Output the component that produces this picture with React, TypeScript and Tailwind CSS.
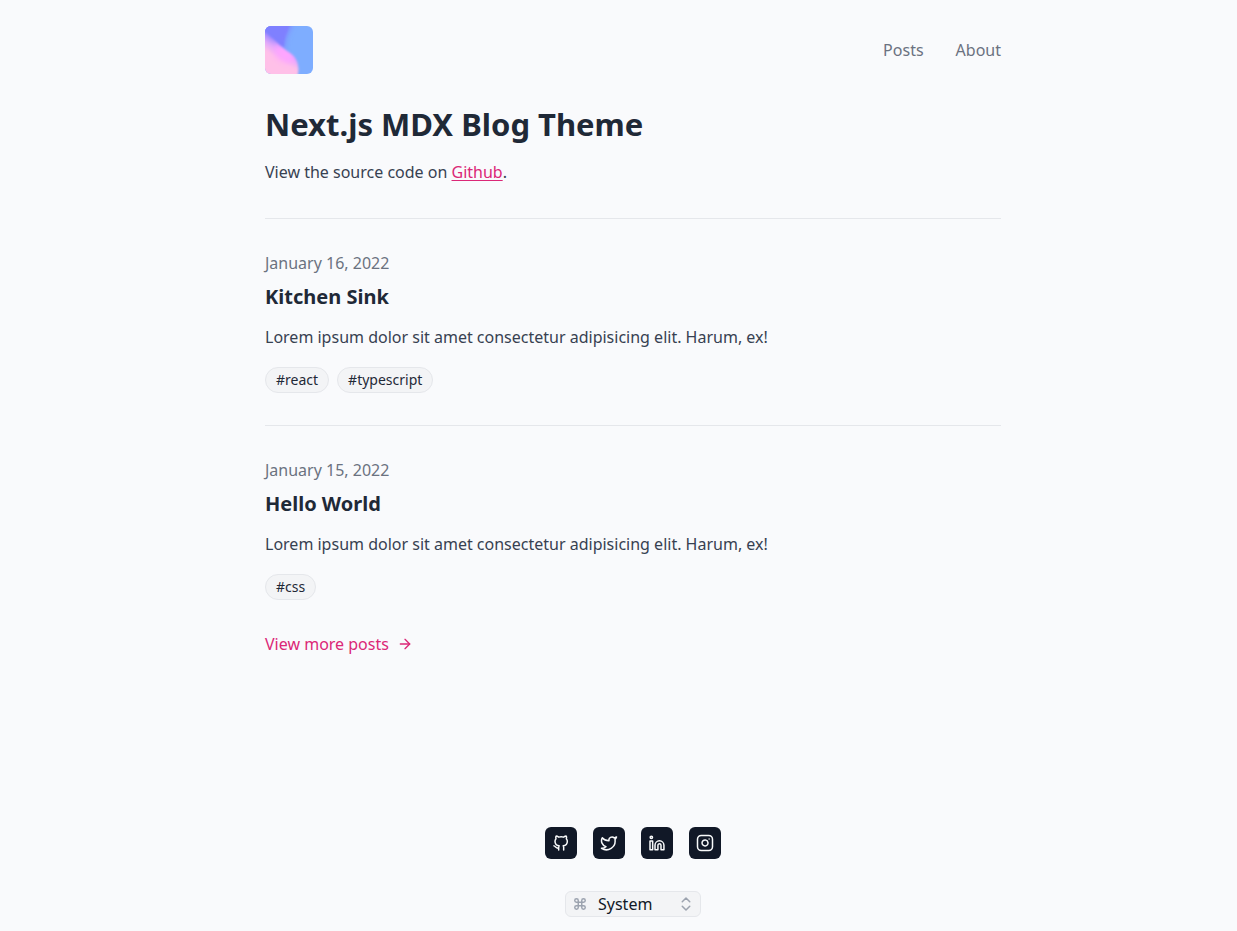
import React from "react";
import { ArrowRight, ChevronsUpDown, Command, Instagram, Twitter } from "lucide-react";

const posts = [
  { date: "January 16, 2022", title: "Kitchen Sink", tags: ["react", "typescript"] },
  { date: "January 15, 2022", title: "Hello World", tags: ["css"] },
];

function Logo() {
  return (
    <svg viewBox="0 0 48 48" className="size-12 rounded-md" aria-hidden="true">
      <defs>
        <filter id="soft" x="-30%" y="-30%" width="160%" height="160%">
          <feGaussianBlur stdDeviation="3" />
        </filter>
        <filter id="edge" x="-30%" y="-30%" width="160%" height="160%">
          <feGaussianBlur stdDeviation="1" />
        </filter>
        <linearGradient id="pink" gradientUnits="userSpaceOnUse" x1="8" y1="12" x2="0" y2="24">
          <stop offset="0" stopColor="#a08aff" />
          <stop offset="0.5" stopColor="#e0a8fa" />
          <stop offset="1" stopColor="#ffc0e8" />
        </linearGradient>
        <clipPath id="wave">
          <path d="M-4 4C6 9 12 18 22 25C31 30 36 38 32 52H-4Z" />
        </clipPath>
      </defs>
      <rect width="48" height="48" fill="#7eadff" />
      <path d="M-6 -6H28C25 4 17 12 20 24L-6 14Z" fill="#7f80ff" filter="url(#soft)" />
      <path d="M-6 -6H26C25 2 18 10 19 21L-6 12Z" fill="#7f80ff" filter="url(#edge)" />
      <g filter="url(#edge)">
        <g clipPath="url(#wave)">
          <rect x="-6" width="54" height="54" fill="url(#pink)" />
          <path d="M-6 30L12 34L18 52H-6Z" fill="#ffc0e8" filter="url(#soft)" />
          <ellipse cx="20" cy="28" rx="13" ry="8" transform="rotate(40 20 28)" fill="#ffa5ff" filter="url(#soft)" />
          <path d="M8 38L34 42V52H-4Z" fill="#ffc0e8" filter="url(#soft)" />
        </g>
      </g>
    </svg>
  );
}

function GithubIcon() {
  return (
    <svg viewBox="0 0 24 24" className="size-4" fill="none" stroke="currentColor" strokeWidth="2.25" strokeLinecap="round" strokeLinejoin="round" aria-hidden="true">
      <path d="M16 22.500v-4c0-1-.1-1.600-.7-2.200 3.200-.4 6.200-1.800 6.200-7a5.600 5.600 0 0 0-1.500-3.800 5 5 0 0 0-.1-3.800s-1.200-.3-4 1.500a14 14 0 0 0-7.300 0C5.800 1.400 4.600 1.700 4.600 1.700a5 5 0 0 0-.1 3.800A5.600 5.600 0 0 0 3 9.300c0 5.200 3.100 6.600 6.200 7-.6.600-.7 1.300-.7 2.200v4M8.500 19.500C5 20.700 4 17 1.500 16.300" />
    </svg>
  );
}

function LinkedinIcon() {
  return (
    <svg viewBox="0 0 24 24" className="size-4" fill="none" stroke="currentColor" strokeWidth="2.25" strokeLinejoin="round" aria-hidden="true">
      <circle cx="3.500" cy="3.500" r="1.800" />
      <path d="M1.500 9h4v13h-4ZM9 22v-6.500a6.700 6.700 0 0 1 13.400 0V22h-4.400v-6.500a2.300 2.300 0 0 0-4.600 0V22Z" />
    </svg>
  );
}

const socials = [
  { name: "Github", icon: <GithubIcon /> },
  { name: "Twitter", icon: <Twitter className="size-[18px]" /> },
  { name: "LinkedIn", icon: <LinkedinIcon /> },
  { name: "Instagram", icon: <Instagram className="size-[18px]" /> },
];

export default function App() {
  return (
    <div className="min-h-screen bg-[#f9fafc] pl-[29px] font-['Noto_Sans',sans-serif] text-base leading-7 text-[#374151]">
      <div className="mx-auto max-w-3xl px-4">
        <header className="flex items-center justify-between pt-[26px]">
          <a href="#" aria-label="Home"><Logo /></a>
          <nav className="flex gap-8 text-[#6b7280]">
            <a href="#posts">Posts</a>
            <a href="#about">About</a>
          </nav>
        </header>
        <main>
          <h1 className="mt-[30px] text-[31px] leading-10 font-bold text-[#1f2937]">Next.js MDX Blog Theme</h1>
          <p className="mt-3.5 mb-8">
            View the source code on <a href="#github" className="text-[#db2777] underline underline-offset-2">Github</a>.
          </p>
          {posts.map((post) => (
            <article key={post.title} className="border-t border-[#e5e7eb] pt-[30px] pb-8">
              <time className="block text-[#6b7280]">{post.date}</time>
              <h2 className="mt-1.5 text-xl leading-7 font-bold text-[#1f2937]">{post.title}</h2>
              <p className="mt-3">Lorem ipsum dolor sit amet consectetur adipisicing elit. Harum, ex!</p>
              <div className="mt-4 flex gap-2">
                {post.tags.map((tag) => (
                  <a key={tag} href="#tag" className="rounded-full border border-[#e5e7eb] bg-[#f3f4f6] px-2.5 text-sm leading-6 text-[#1f2937]">#{tag}</a>
                ))}
              </div>
            </article>
          ))}
          <a href="#more" className="-mt-0.5 flex w-fit items-center gap-2 text-[#db2777]">
            View more posts <ArrowRight className="size-4" />
          </a>
        </main>
        <footer className="flex flex-col items-center gap-8 pt-[169px] pb-3.5">
          <div className="flex gap-4">
            {socials.map((s) => (
              <a key={s.name} href="#social" aria-label={s.name} className="flex size-8 items-center justify-center rounded-md bg-[#111827] text-[#f9fafb]">{s.icon}</a>
            ))}
          </div>
          <div className="relative flex w-34 items-center text-[#9ca3af]">
            <Command className="pointer-events-none absolute left-2 size-3.5" strokeWidth={2.5} />
            <select aria-label="Theme" className="h-[26px] w-full appearance-none rounded-md border border-[#e5e7eb] bg-[#f3f4f6] pl-8 leading-6 text-[#111827]">
              <option>System</option>
              <option>Light</option>
              <option>Dark</option>
            </select>
            <ChevronsUpDown className="pointer-events-none absolute right-1.5 size-[18px]" />
          </div>
        </footer>
      </div>
    </div>
  );
}
